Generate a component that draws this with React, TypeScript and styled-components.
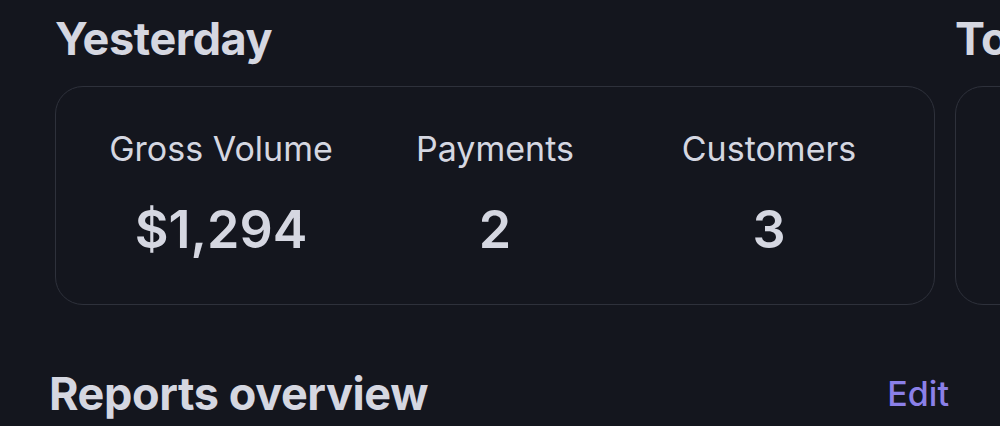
import styled, { createGlobalStyle } from "styled-components";

const GlobalStyle = createGlobalStyle`
  html, body {
    margin: 0;
    padding: 0;
    background-color: #14161e;
  }
  body {
    font-family: Inter, "Noto Sans", "Liberation Sans", sans-serif;
    color: #d5d7e1;
    -webkit-font-smoothing: antialiased;
  }
`;

const Page = styled.div`
  width: 1000px;
  height: 426px;
  overflow: hidden;
  background-color: #14161e;
`;

const SummaryStrip = styled.div`
  display: flex;
  gap: 20px;
  padding-left: 55px;
  padding-top: 12px;
`;

const Summary = styled.section`
  flex: 0 0 880px;
  display: flex;
  flex-direction: column;
  gap: 20px;
`;

const SectionTitle = styled.h2`
  margin: 0;
  font-size: 45px;
  line-height: 54px;
  font-weight: 700;
  letter-spacing: -0.4px;
  color: #d5d7e1;
  white-space: nowrap;
`;

const StatCard = styled.div`
  box-sizing: border-box;
  height: 219px;
  border: 1.5px solid #2e313b;
  border-radius: 28px;
  padding: 42px 28px 0;
  display: grid;
  grid-template-columns: repeat(3, 1fr);
`;

const Stat = styled.div`
  display: flex;
  flex-direction: column;
  align-items: center;
  gap: 31px;
`;

const StatLabel = styled.div`
  font-size: 34px;
  line-height: 40px;
  font-weight: 400;
  color: #d5d7e1;
`;

const StatValue = styled.div`
  font-size: 52px;
  line-height: 60px;
  font-weight: 600;
  color: #d5d7e1;
`;

const ReportsHeader = styled.div`
  display: flex;
  align-items: center;
  justify-content: space-between;
  margin-top: 62px;
  padding: 0 51px 0 49px;
`;

const EditButton = styled.button`
  border: none;
  background: none;
  padding: 0;
  font-family: inherit;
  font-size: 34px;
  line-height: 40px;
  font-weight: 500;
  color: #8b80e8;
  cursor: pointer;
`;

interface IStat {
  label: string;
  value: string;
}

const yesterday: IStat[] = [
  { label: "Gross Volume", value: "$1,294" },
  { label: "Payments", value: "2" },
  { label: "Customers", value: "3" },
];

const SummaryCard = ({ title, stats }: { title: string; stats: IStat[] }) => (
  <Summary>
    <SectionTitle>{title}</SectionTitle>
    <StatCard>
      {stats.map((s) => (
        <Stat key={s.label}>
          <StatLabel>{s.label}</StatLabel>
          <StatValue>{s.value}</StatValue>
        </Stat>
      ))}
    </StatCard>
  </Summary>
);

export default function App() {
  return (
    <Page>
      <GlobalStyle />
      <SummaryStrip>
        <SummaryCard title="Yesterday" stats={yesterday} />
        <SummaryCard title="Today" stats={[]} />
      </SummaryStrip>
      <ReportsHeader>
        <SectionTitle>Reports overview</SectionTitle>
        <EditButton>Edit</EditButton>
      </ReportsHeader>
    </Page>
  );
}
